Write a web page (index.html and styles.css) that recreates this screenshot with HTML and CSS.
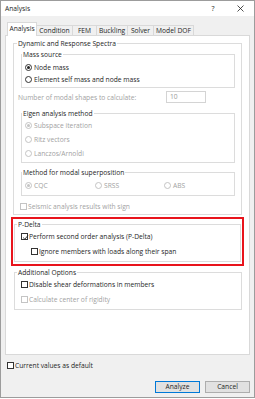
FILE: index.html
```html
<!DOCTYPE html>
<html lang="en">
  <head>
    <meta charset="UTF-8" />
    <title>Analysis</title>
    <link rel="stylesheet" href="styles.css">
  </head>
  <body>
    <div class="window">
      <header class="titlebar">
        <span class="title">Analysis</span>
        <span class="help">?</span>
        <span class="close">
          <svg width="7" height="7" viewBox="0 0 7 7" aria-hidden="true">
            <path d="M0.5 0.5 L6.5 6.5 M6.5 0.5 L0.5 6.5" stroke="#222" stroke-width="0.8" />
          </svg>
        </span>
      </header>

      <div class="content">
        <nav class="tabs">
          <span class="tab active w-analysis">Analysis</span>
          <span class="tab w-condition">Condition</span>
          <span class="tab w-fem">FEM</span>
          <span class="tab w-buckling">Buckling</span>
          <span class="tab w-solver">Solver</span>
          <span class="tab w-dof">Model DOF</span>
        </nav>

        <section class="panel">
          <fieldset class="group outer">
            <legend>Dynamic and Response Spectra</legend>

            <fieldset class="group inner">
              <legend>Mass source</legend>
              <div class="opt"><span class="radio on"></span>Node mass</div>
              <div class="opt"><span class="radio"></span>Element self mass and node mass</div>
            </fieldset>

            <div class="count off">
              <span>Number of modal shapes to calculate:</span>
              <span class="input">10</span>
            </div>

            <fieldset class="group inner eigen">
              <legend>Eigen analysis method</legend>
              <div class="opt off"><span class="radio on"></span>Subspace iteration</div>
              <div class="opt off"><span class="radio"></span>Ritz vectors</div>
              <div class="opt off"><span class="radio"></span>Lanczos/Arnoldi</div>
            </fieldset>

            <fieldset class="group inner method">
              <legend>Method for modal superposition</legend>
              <div class="row">
                <div class="opt off cqc"><span class="radio on"></span>CQC</div>
                <div class="opt off srss"><span class="radio"></span>SRSS</div>
                <div class="opt off"><span class="radio"></span>ABS</div>
              </div>
            </fieldset>

            <div class="opt off seismic"><span class="check"></span>Seismic analysis results with sign</div>
          </fieldset>

          <div class="mark">
            <fieldset class="group wide pdelta">
              <legend>P-Delta</legend>
              <div class="opt tall">
                <span class="check on">
                  <svg width="7" height="7" viewBox="0 0 7 7" aria-hidden="true">
                    <path d="M1.2 3.6 L2.8 5.2 L5.9 1.6" fill="none" stroke="#222" stroke-width="0.9" />
                  </svg>
                </span>Perform second order analysis (P-Delta)
              </div>
              <div class="opt tall sub"><span class="check"></span>Ignore members with loads along their span</div>
            </fieldset>
          </div>

          <fieldset class="group wide extra">
            <legend>Additional Options</legend>
            <div class="opt tall"><span class="check"></span>Disable shear deformations in members</div>
            <div class="opt tall off"><span class="check"></span>Calculate center of rigidity</div>
          </fieldset>
        </section>

        <div class="default opt"><span class="check"></span>Current values as default</div>

        <div class="buttons">
          <button type="button" class="primary">Analyze</button>
          <button type="button">Cancel</button>
        </div>
      </div>
    </div>
  </body>
</html>
```

FILE: styles.css
```css
/* Global styles */
* {
  margin: 0;
  padding: 0;
  box-sizing: border-box;
}
body {
  width: 255px;
  height: 399px;
  color: #1e1e1e;
  font: 6.7px/9px "Open Sans", sans-serif;
  background: #fff;
}
button {
  font: inherit;
  color: inherit;
}

/* Window frame */
.window {
  height: 398px;
  display: flex;
  flex-direction: column;
  border: 1px solid #9c9c9c;
  background: #f0f0f0;
}
.titlebar {
  height: 15px;
  display: flex;
  align-items: center;
  padding-left: 4px;
  background: #fff;
}
.titlebar .title {
  flex: 1;
}
.titlebar .help,
.titlebar .close {
  display: flex;
  justify-content: center;
  align-items: center;
  height: 100%;
}
.titlebar .help {
  width: 26px;
  font-size: 7px;
}
.titlebar .close {
  width: 28px;
}

.content {
  flex: 1;
  display: flex;
  flex-direction: column;
  padding: 6px 4px 0;
}

/* Tabs */
.tabs {
  height: 13px;
  display: flex;
  align-items: flex-end;
  padding-left: 3px;
}
.tab {
  height: 10px;
  line-height: 9px;
  text-align: center;
  border: 1px solid #d9d9d9;
  border-bottom: none;
  margin-left: -1px;
  background: #f0f0f0;
}
.tab.active {
  position: relative;
  height: 14px;
  line-height: 9px;
  padding-top: 1px;
  margin-bottom: -1px;
  background: #fff;
}
.w-analysis { width: 30px; }
.w-condition { width: 37px; }
.w-fem { width: 25px; }
.w-buckling { width: 32px; }
.w-solver { width: 27px; }
.w-dof { width: 41px; }

/* Panel */
.panel {
  height: 320px;
  padding: 3px 7px 0;
  border: 1px solid #d9d9d9;
  background: #fff;
}

/* Group boxes */
.group {
  min-width: 0;
  border: 1px solid #dcdcdc;
  padding: 0 3px;
}
.group legend {
  height: 9px;
  padding: 0 1px;
  margin-left: -3px;
}
.group.outer {
  padding: 2px 6px 2px;
}
.group.inner {
  margin-left: 1px;
  padding-top: 2px;
  padding-bottom: 2px;
}
.group.eigen {
  margin-top: 6px;
  padding-top: 0;
}
.group.eigen .opt {
  height: 14px;
}
.group.method {
  margin-top: 5px;
  padding-bottom: 4px;
}
.group.wide {
  padding: 0 6px 2px;
}
.group.wide legend {
  margin-left: -4px;
}
.group.extra {
  margin: 2px 0 0 1px;
}

.mark {
  margin: 2px -2px 0;
  padding: 1px 0 2px;
  border: 2px solid #e8141c;
}
.mark .group {
  margin: 0 1px;
}

/* Options */
.opt {
  height: 12px;
  display: flex;
  align-items: center;
  white-space: nowrap;
}
.opt.tall {
  height: 15px;
}
.opt.sub {
  padding-left: 10px;
}
.off {
  color: #a2a2a2;
}
.seismic {
  margin-top: 4px;
}
.row {
  display: flex;
}
.cqc {
  width: 70px;
}
.srss {
  width: 69px;
}

.radio,
.check {
  flex: none;
  width: 7px;
  height: 7px;
  margin-right: 2px;
  border: 1px solid #333;
  background: #fff;
}
.radio {
  display: grid;
  place-items: center;
  border-radius: 50%;
}
.radio.on::after {
  content: "";
  width: 3px;
  height: 3px;
  border-radius: 50%;
  background: #222;
}
.off .radio,
.off .check {
  border-color: #c4c4c4;
}
.off .radio.on::after {
  background: #c4c4c4;
}
.check {
  display: grid;
  place-items: center;
  margin-right: 1px;
}
.check svg {
  display: block;
}

.count {
  height: 12px;
  margin: 3px 0 0 -2px;
  display: flex;
  align-items: center;
  justify-content: space-between;
  padding-right: 29px;
}
.count .input {
  width: 40px;
  height: 12px;
  line-height: 10px;
  padding-left: 3px;
  border: 1px solid #d4d4d4;
  color: #9a9a9a;
}

/* Footer */
.default {
  height: 10px;
  margin: 5px 0 0 2px;
}
.buttons {
  display: flex;
  justify-content: flex-end;
  gap: 5px;
  margin-top: 11px;
}
.buttons button {
  width: 45px;
  height: 12px;
  line-height: 10px;
  border: 1px solid #adadad;
  background: #e1e1e1;
}
.buttons .primary {
  border-color: #0078d7;
}
```
